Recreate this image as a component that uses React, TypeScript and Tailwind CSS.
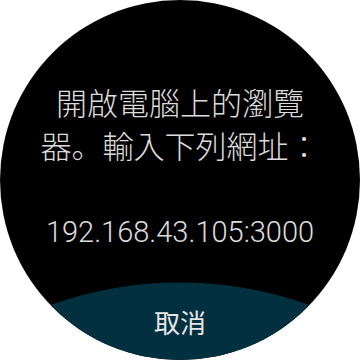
import React from "react";

export default function App() {
  return (
    <div className="flex h-[360px] w-[360px] items-center justify-center bg-white">
      {/* Watch face */}
      <div className="flex h-[360px] w-[360px] flex-col overflow-hidden rounded-full bg-black">
        <div className="flex flex-1 flex-col items-center">
          <p className="mt-[80px] w-[282px] text-center font-['Noto_Sans_CJK_JP','Noto_Sans_CJK_TC',sans-serif] text-[31px] font-light leading-[43px] text-[#dcdcdc]">
            開啟電腦上的瀏覽器。輸入下列網址：
          </p>
          <p className="mt-[46px] text-center font-['Roboto','Noto_Sans',sans-serif] text-[29px] font-light leading-[40px] text-[#dcdcdc]">
            192.168.43.105:3000
          </p>
        </div>

        {/* Cancel button */}
        <button className="flex h-[78px] w-full shrink-0 items-center justify-center bg-[radial-gradient(circle_at_50%_382px,#03303f_381px,transparent_382px)] pt-[2px]">
          <span className="font-['Noto_Sans_CJK_JP','Noto_Sans_CJK_TC',sans-serif] text-[26px] leading-none text-[#e6e6e6]">
            取消
          </span>
        </button>
      </div>
    </div>
  );
}
